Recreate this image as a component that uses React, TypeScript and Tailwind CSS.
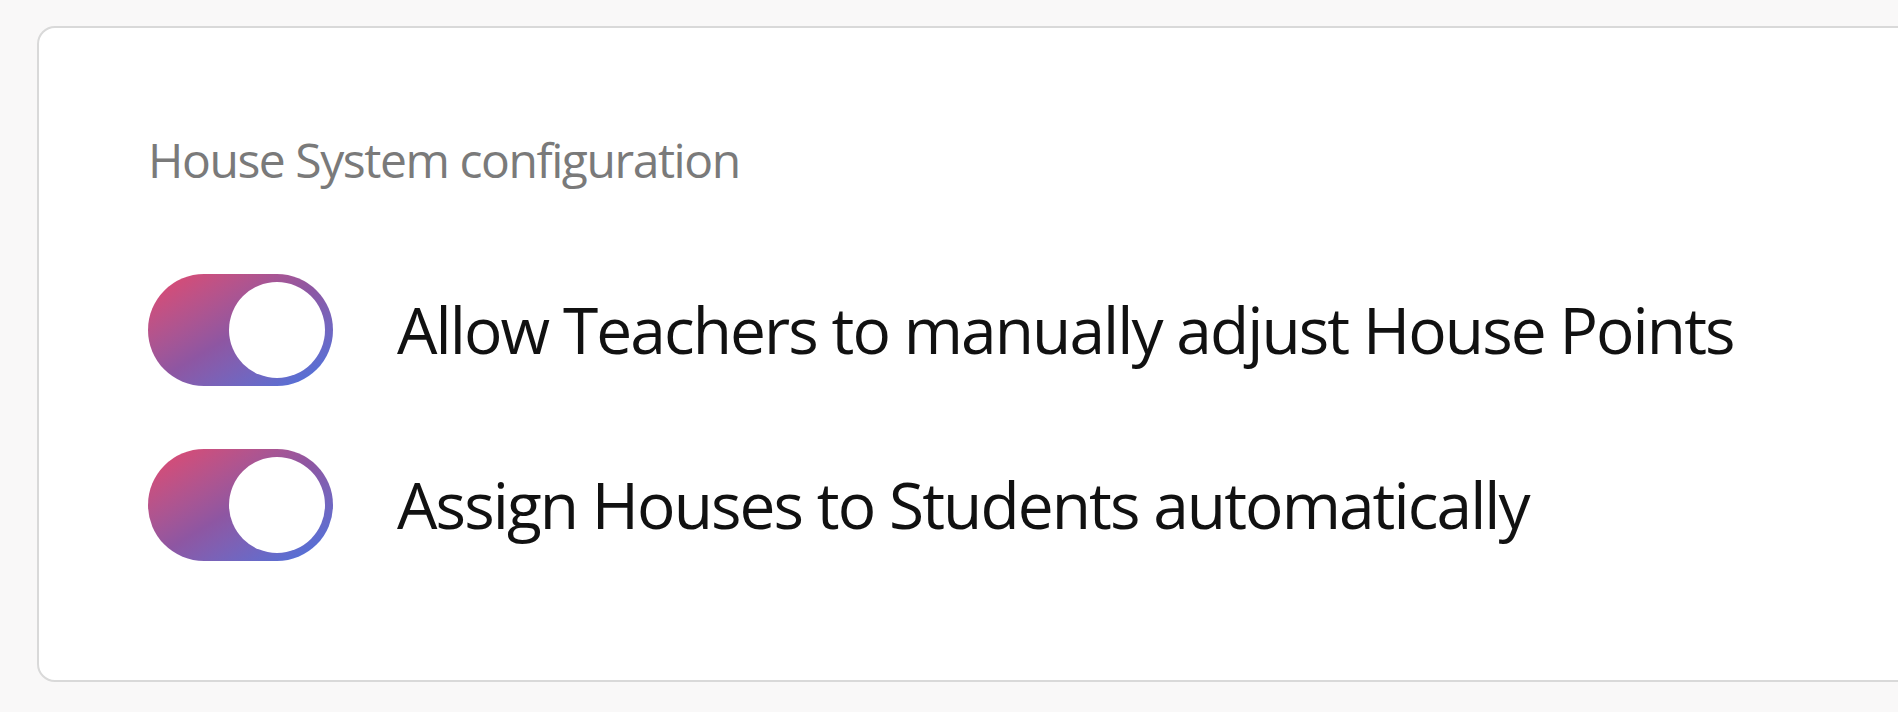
import { useState } from "react";

interface ToggleRowProps {
  label: string;
  defaultOn?: boolean;
}

function ToggleRow({ label, defaultOn = true }: ToggleRowProps) {
  const [on, setOn] = useState<boolean>(defaultOn);

  return (
    <div className="flex items-center gap-[64px]">
      <button
        type="button"
        onClick={() => setOn(!on)}
        className={`flex h-[112px] w-[185px] shrink-0 items-center rounded-full p-[8px] ${
          on
            ? "justify-end bg-linear-to-br from-[#e4456c] via-[#8e56a2] to-[#3f74e2]"
            : "justify-start bg-[#d4d4d8]"
        }`}
      >
        <span className="block h-[96px] w-[96px] rounded-full bg-white" />
      </button>
      <span className="text-[64px] leading-none tracking-[-0.03em] text-[#111111]">
        {label}
      </span>
    </div>
  );
}

export default function App() {
  return (
    <div
      className="h-[712px] w-full overflow-hidden bg-[#f9f8f8] pl-[37px] pt-[26px]"
      style={{ fontFamily: '"Open Sans", "Noto Sans", sans-serif' }}
    >
      <div className="-mr-[40px] h-[656px] rounded-[18px] border-2 border-[#d9d9d9] bg-white pl-[109px] pt-[108px]">
        <h2 className="text-[48px] font-normal leading-none tracking-[-0.03em] text-[#7a7a7a]">
          House System configuration
        </h2>

        <div className="mt-[90px] flex flex-col gap-[63px]">
          <ToggleRow label="Allow Teachers to manually adjust House Points" />
          <ToggleRow label="Assign Houses to Students automatically" />
        </div>
      </div>
    </div>
  );
}
